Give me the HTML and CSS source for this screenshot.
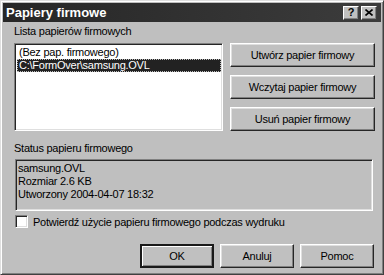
FILE: index.html
```html
<!DOCTYPE html>
<html lang="pl">
<head>
  <meta charset="UTF-8">
  <title>Papiery firmowe</title>
  <link rel="stylesheet" href="styles.css">
</head>
<body>
  <div class="okno">
    <div class="tytul">
      <span class="tytul-tekst">Papiery firmowe</span>
      <div class="tytul-przyciski">
        <span class="maly-przycisk pomoc-znak">?</span>
        <span class="maly-przycisk">
          <svg width="8" height="7" viewBox="0 0 8 7"><path d="M0.5 0.5 L7.5 6.5 M7.5 0.5 L0.5 6.5" stroke="#000" stroke-width="1.6" fill="none"/></svg>
        </span>
      </div>
    </div>

    <div class="tresc">
      <div class="etykieta">Lista papierów firmowych</div>
      <div class="gora">
        <div class="lista">
          <div class="pozycja">(Bez pap. firmowego)</div>
          <div class="pozycja wybrana">C:\FormOver\samsung.OVL</div>
        </div>
        <div class="kolumna-przyciskow">
          <button class="przycisk">Utwórz papier firmowy</button>
          <button class="przycisk">Wczytaj papier firmowy</button>
          <button class="przycisk">Usuń papier firmowy</button>
        </div>
      </div>

      <div class="etykieta status-etykieta">Status papieru firmowego</div>
      <div class="status">
        samsung.OVL<br>
        Rozmiar 2.6 KB<br>
        Utworzony 2004-04-07 18:32
      </div>

      <label class="potwierdz">
        <span class="pole"></span>
        Potwierdź użycie papieru firmowego podczas wydruku
      </label>

      <div class="dol">
        <button class="przycisk domyslny">OK</button>
        <button class="przycisk">Anuluj</button>
        <button class="przycisk">Pomoc</button>
      </div>
    </div>
  </div>
</body>
</html>
```

FILE: styles.css
```css
body {
  margin: 0;
  background: #c0c0c0;
  font-family: "Liberation Sans", Arial, sans-serif;
  font-size: 11px;
  letter-spacing: -0.25px;
  color: #000;
}

.okno {
  width: 384px;
  height: 275px;
  box-sizing: border-box;
  background: #bfbfbf;
  border: 1px solid;
  border-color: #dfdfdf #404040 #404040 #dfdfdf;
  box-shadow: inset 1px 1px #fff, inset -1px -1px #808080;
  padding: 2px;
}

.tytul {
  height: 19px;
  background: linear-gradient(to right, #262626, #3c3c3c);
  display: flex;
  align-items: center;
  justify-content: space-between;
  padding: 0 4px 0 3px;
}

.tytul-tekst {
  color: #fff;
  font-weight: bold;
  font-size: 13px;
  letter-spacing: 0;
}

.tytul-przyciski {
  display: flex;
  gap: 2px;
}

.maly-przycisk {
  width: 16px;
  height: 14px;
  box-sizing: border-box;
  background: #c0c0c0;
  border: 1px solid;
  border-color: #fff #404040 #404040 #fff;
  box-shadow: inset -1px -1px #808080;
  display: flex;
  align-items: center;
  justify-content: center;
}

.pomoc-znak {
  font-weight: bold;
  font-size: 11px;
  line-height: 1;
}

.tresc {
  padding: 3px 6px 0 11px;
}

.etykieta {
  height: 13px;
  line-height: 13px;
}

.gora {
  display: grid;
  grid-template-columns: 209px 1fr;
  column-gap: 7px;
  margin-top: 5px;
}

.lista {
  height: 88px;
  box-sizing: border-box;
  background: #fff;
  border: 1px solid;
  border-color: #808080 #fff #fff #808080;
  box-shadow: inset 1px 1px #262626, inset -1px -1px #dfdfdf;
  padding: 2px 1px 2px 2px;
}

.pozycja {
  height: 13px;
  line-height: 13px;
  padding-left: 2px;
}

.wybrana {
  background: #222;
  color: #fff;
  outline: 1px dotted #bbb;
  outline-offset: -1px;
}

.kolumna-przyciskow {
  display: flex;
  flex-direction: column;
  gap: 8px;
}

.przycisk {
  height: 24px;
  box-sizing: border-box;
  background: #c0c0c0;
  font-family: inherit;
  font-size: inherit;
  letter-spacing: inherit;
  color: #000;
  border: 1px solid;
  border-color: #fff #262626 #262626 #fff;
  box-shadow: inset -1px -1px #808080, inset 1px 1px #dfdfdf;
  padding: 0;
}

.domyslny {
  border: 2px solid #1a1a1a;
  box-shadow: inset 1px 1px #fff, inset -1px -1px #808080;
}

.status-etykieta {
  margin-top: 11px;
}

.status {
  height: 52px;
  box-sizing: border-box;
  margin: 4px 2px 0 1px;
  border: 1px solid;
  border-color: #808080 #fff #fff #808080;
  box-shadow: inset 1px 1px #262626, inset -1px -1px #dfdfdf;
  padding: 2px 2px 0 2px;
  line-height: 13px;
}

.potwierdz {
  display: flex;
  align-items: center;
  gap: 5px;
  margin-top: 4px;
  margin-left: 1px;
  height: 13px;
}

.pole {
  width: 13px;
  height: 13px;
  box-sizing: border-box;
  background: #fff;
  border: 1px solid;
  border-color: #808080 #fff #fff #808080;
  box-shadow: inset 1px 1px #262626, inset -1px -1px #dfdfdf;
}

.dol {
  display: flex;
  justify-content: flex-end;
  gap: 6px;
  margin-top: 16px;
  padding-right: 1px;
}

.dol .przycisk {
  width: 74px;
}
```
